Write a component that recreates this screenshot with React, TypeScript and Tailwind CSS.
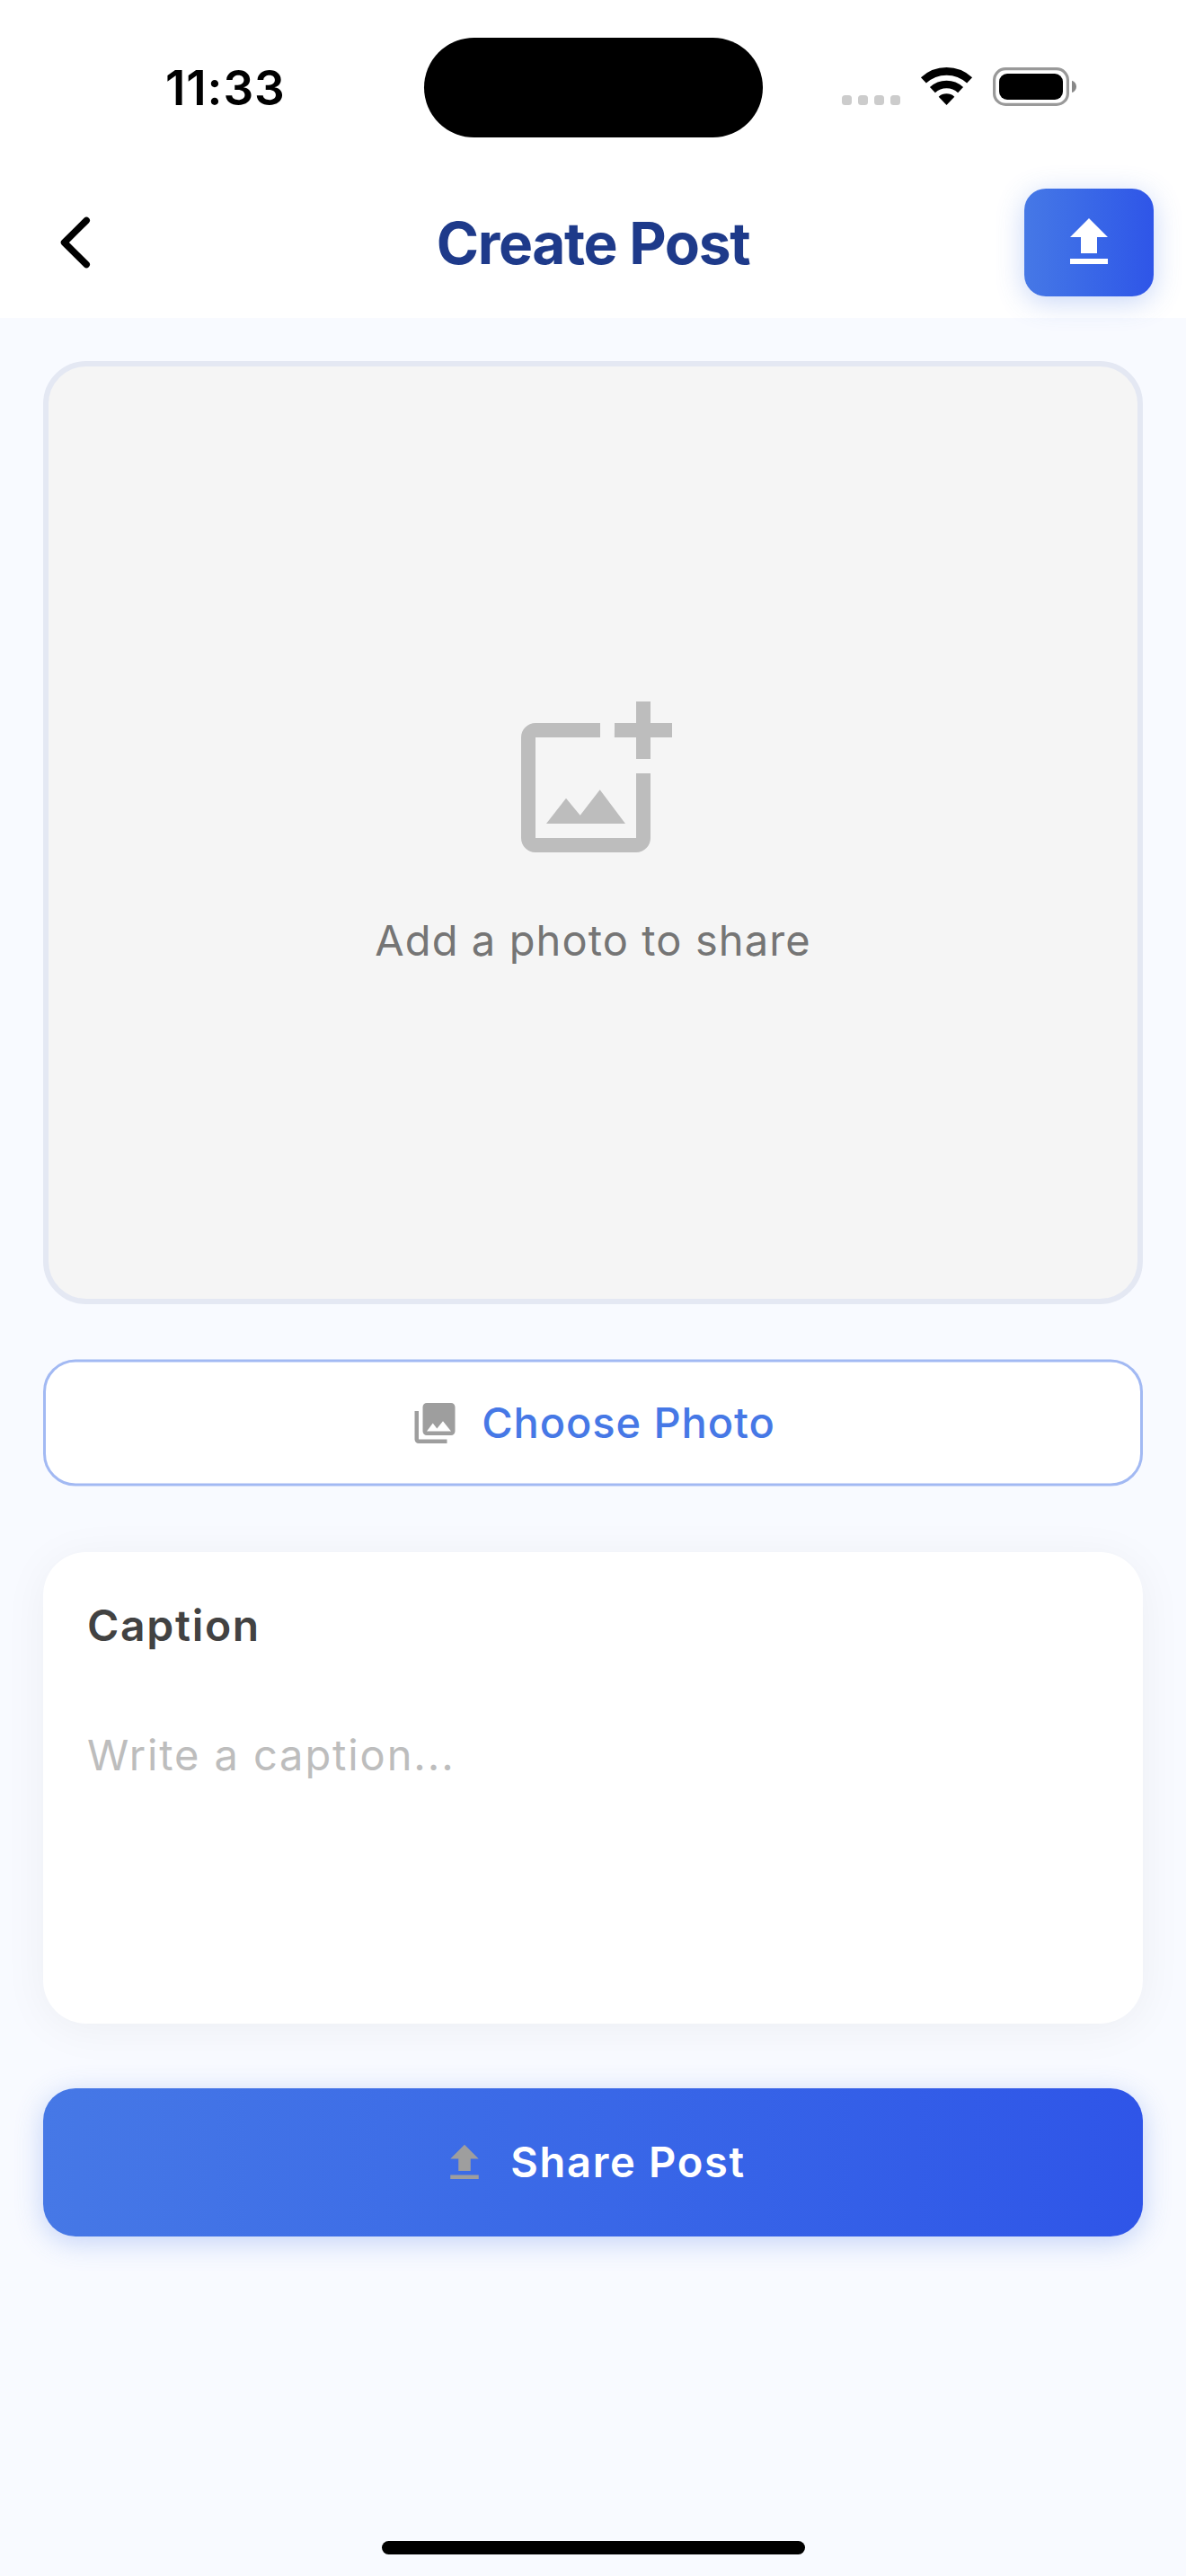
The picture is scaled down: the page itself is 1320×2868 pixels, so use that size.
import { MdFileUpload, MdPhotoLibrary, MdOutlineAddPhotoAlternate } from "react-icons/md";

function StatusBar() {
  return (
    <div className="relative h-[186px]">
      <div className="absolute left-[471.500px] top-[41.500px] h-[111px] w-[377px] rounded-full bg-black" />
      <div className="absolute left-[184px] top-[66px] text-[53px] font-semibold leading-[64px] tracking-[0.900px] text-black">11:33</div>
      <svg className="absolute left-[920px] top-[60px]" width="300" height="70" viewBox="0 0 300 70">
        <g fill="#cccccc">
          <rect x="17" y="46" width="11" height="11" rx="3.500" />
          <rect x="35" y="46" width="11" height="11" rx="3.500" />
          <rect x="53" y="46" width="11" height="11" rx="3.500" />
          <rect x="71" y="46" width="11" height="11" rx="3.500" />
        </g>
        <g fill="none" stroke="#000" strokeWidth="8.7">
          <path d="M107.900 29.400a37.600 37.600 0 0 1 51.200 0" />
          <path d="M117.900 40.100a23 23 0 0 1 31.200 0" />
        </g>
        <path d="M133.500 57l-8.800-9.300a13.300 13.300 0 0 1 17.600 0z" />
        <rect x="186.600" y="16.600" width="81.800" height="39.800" rx="12.500" fill="none" stroke="#999" strokeWidth="3.200" />
        <rect x="192" y="22" width="71" height="29" rx="9" />
        <path d="M273 29.700c3 1 5 3.700 5 6.700s-2 5.700-5 6.700z" fill="#888" />
      </svg>
    </div>
  );
}

function Header() {
  return (
    <header className="flex h-[168px] items-center justify-between pl-[48px] pr-[36px]">
      <button className="w-[132px]" aria-label="Back">
        <svg width="72" height="72" viewBox="0 0 72 72" fill="none" stroke="#000" strokeWidth="7.500" strokeLinecap="round" strokeLinejoin="round">
          <path d="M48.200 11.500L23.500 36l24.700 24.500" />
        </svg>
      </button>
      <h1 className="mt-[2px] text-[64px] font-bold leading-[80px] tracking-[-1.350px] text-[#1e3a8a]">Create Post</h1>
      <button aria-label="Upload" className="flex h-[120px] w-[144px] items-center justify-center rounded-[24px] bg-linear-to-r from-[#4678e6] to-[#2f55e8] text-white shadow-[0_6px_31px_rgba(70,120,230,0.3)]">
        <MdFileUpload size={72} />
      </button>
    </header>
  );
}

export default function App() {
  return (
    <div className="relative flex h-[2868px] w-[1320px] flex-col overflow-hidden bg-[#f8faff] font-['Inter',sans-serif]">
      <div className="bg-white">
        <StatusBar />
        <Header />
      </div>
      <main className="flex flex-col px-[48px] pt-[48px]">
        <section className="flex h-[1050px] flex-col items-center rounded-[48px] border-[6px] border-[#e4e8f3] bg-[#f5f5f5] pt-[365px]">
          <MdOutlineAddPhotoAlternate size={192} color="#bdbdbd" />
          <p className="mt-[52px] text-[47px] leading-[60px] tracking-[1.100px] text-[#757575]">Add a photo to share</p>
        </section>
        <button className="mt-[61px] flex h-[141px] translate-y-[0.5px] items-center justify-center gap-[25px] rounded-[36px] border-[3px] border-[#a2b9f3] bg-white">
          <MdPhotoLibrary size={54} color="#9e9e9e" />
          <span className="mb-[2px] text-[47px] font-medium leading-[60px] tracking-[0.900px] text-[#4678e6]">Choose Photo</span>
        </button>
        <section className="mt-[74px] h-[525px] rounded-[48px] bg-white px-[49px] pt-[52px] shadow-[0_6px_50px_rgba(0,0,0,0.05)]">
          <h2 className="text-[48px] font-semibold leading-[60px] tracking-[1.700px] text-[#424242]">Caption</h2>
          <p className="mt-[84px] text-[47px] leading-[60px] tracking-[1.900px] text-[#bdbdbd]">Write a caption...</p>
        </section>
        <button className="mt-[72px] flex h-[165px] items-center justify-center gap-[24px] rounded-[36px] bg-linear-to-r from-[#4678e6] to-[#2f55e8] shadow-[0_6px_31px_rgba(70,120,230,0.3)]">
          <MdFileUpload size={54} color="#9e9e9e" />
          <span className="mb-[2px] text-[47px] font-semibold leading-[60px] tracking-[1.700px] text-white">Share Post</span>
        </button>
      </main>
      <div className="mx-auto mb-[24px] mt-auto h-[15px] w-[471px] rounded-full bg-black" />
    </div>
  );
}
